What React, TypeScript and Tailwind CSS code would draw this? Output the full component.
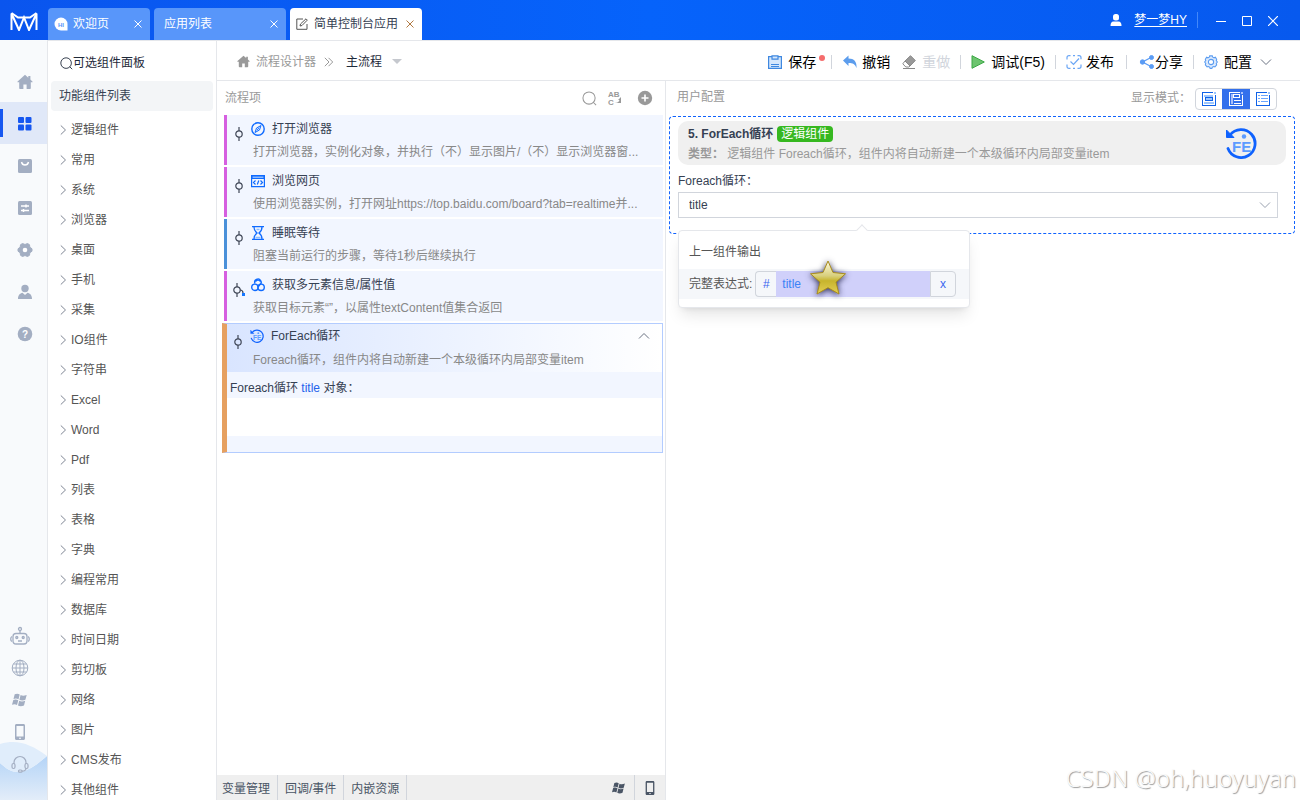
import type { ReactNode } from 'react';

const categorias = [
  '逻辑组件', '常用', '系统', '浏览器', '桌面', '手机', '采集', 'IO组件', '字符串', 'Excel', 'Word', 'Pdf',
  '列表', '表格', '字典', '编程常用', '数据库', '时间日期', '剪切板', '网络', '图片', 'CMS发布', '其他组件'
];

function Close() {
  return (
    <svg width="8" height="8" viewBox="0 0 8 8" fill="none" stroke="currentColor">
      <path d="M.5.5l7 7M7.5.5l-7 7" />
    </svg>
  );
}

function Chevron({ className = '' }: { className?: string }) {
  return (
    <svg className={className} width="12" height="8" viewBox="0 0 12 8" fill="none" stroke="currentColor">
      <path d="M1 1.5l5 5 5-5" />
    </svg>
  );
}

function HomeIcon({ size }: { size: number }) {
  return (
    <svg width={size} height={size} viewBox="0 0 16 16" fill="currentColor">
      <path d="M8 .8L.6 7.4c-.4.5-.1.9.4.9h1.2V14c0 .6.4 1 1 1h3.2v-4.6h3.2V15h3.2c.6 0 1-.4 1-1V8.300H15c.5 0 .8-.4.4-.9l-2-1.800V2h-2.100v1.700z" />
    </svg>
  );
}

function SearchIcon({ size }: { size: number }) {
  return (
    <svg width={size} height={size} viewBox="0 0 16 16" fill="none" stroke="currentColor" strokeWidth="1.100">
      <circle cx="7.500" cy="7.500" r="6.500" />
      <path d="M12 12l3 3" />
    </svg>
  );
}

function WindowsIcon({ size }: { size: number }) {
  return (
    <svg width={size} height={size} viewBox="0 0 16 16" fill="currentColor">
      <path d="M2.700 2.300c1.800-.9 3.500-.8 5 .2L6.500 7.300c-1.600-.9-3.300-1-5-.2zM8.600 3c1.700.9 3.600.9 6.100-.1l-1.300 4.900c-2.200 1-4.300 1-6 0zM1.300 8c1.700-.8 3.400-.7 5 .2L5 13c-1.600-1-3.300-1-5-.2zM7.200 8.700c1.700.9 3.700.9 6 0L12 13.500c-2.200 1-4.300 1-6 0z" />
    </svg>
  );
}

function PhoneIcon({ size }: { size: number }) {
  return (
    <svg width={size} height={size} viewBox="0 0 16 16">
      <path fill="currentColor" fillRule="evenodd" d="M4.500 0h7C12.400 0 13 .7 13 1.500v13c0 .8-.6 1.500-1.500 1.500h-7C3.600 16 3 15.300 3 14.500v-13C3 .7 3.600 0 4.500 0zm0 2v10.500h7V2zM7 13.700v1h2v-1z" />
    </svg>
  );
}

function ForEachIcon({ size }: { size: number }) {
  return (
    <svg width={size} height={size} viewBox="0 0 32 32" fill="none">
      <path d="M5 8A14 14 0 1 1 3 21.500" stroke="#0f62fe" strokeWidth="2.800" strokeLinecap="round" />
      <path d="M1.500 3v7.500H9L6.500 8 4 5.500z" fill="#0f62fe" stroke="#0f62fe" />
      <text x="7" y="25" fontSize="15" fontWeight="bold" fill="#5c9bff">FE</text>
      <circle cx="19" cy="9.500" r="2.200" fill="#5c9bff" />
    </svg>
  );
}

function NodeMark({ branch = false }: { branch?: boolean }) {
  return (
    <svg width="16" height="16" viewBox="0 0 16 16" fill="none" stroke="#3f4656" strokeWidth="1.200" className="shrink-0">
      <circle cx={branch ? 6 : 8} cy="8" r="3.200" />
      {branch ? <path d="M6 1v4M6 11v4M9 8q3 0 3 3" /> : <path d="M8 1v4M8 11v4" />}
      {branch && <path d="M11 11h3v3h-3z" fill="#1677ff" stroke="none" />}
    </svg>
  );
}

const menuIcons: ReactNode[] = [
  <HomeIcon size={16} />,
  <svg width="14" height="14" viewBox="0 0 14 14" fill="#1657f0">
    <rect width="6" height="6" rx="1" />
    <rect x="7.500" width="6" height="6" rx="1" />
    <rect y="7.500" width="6" height="6" rx="1" />
    <rect x="7.500" y="7.500" width="6" height="6" rx="1" />
  </svg>,
  <svg width="14" height="14" viewBox="0 0 14 14">
    <rect width="14" height="14" rx="1.500" fill="currentColor" />
    <path d="M3.500 3c.8 4 6.200 4 7 0" fill="none" stroke="#fff" strokeWidth="1.400" />
  </svg>,
  <svg width="14" height="14" viewBox="0 0 14 14">
    <rect width="14" height="14" rx="1.500" fill="currentColor" />
    <path d="M3 5h8M3 9.500h8" stroke="#fff" strokeWidth="1.300" />
    <path d="M8 3.500v3M5.500 8v3" stroke="#fff" strokeWidth="1.500" />
  </svg>,
  <svg width="16" height="16" viewBox="0 0 16 16">
    <path d="M5.500 1.500L8 2.500l2.500-1 2 1.200.3 2.500 2.200 1.600v2.400l-2.200 1.600-.3 2.500-2 1.200-2.500-1-2.500 1-2-1.200-.3-2.500L1 9.200V6.800l2.200-1.600.3-2.500z" fill="currentColor" stroke="currentColor" strokeLinejoin="round" />
    <circle cx="8" cy="8" r="2.300" fill="#fff" />
  </svg>,
  <svg width="16" height="16" viewBox="0 0 16 16" fill="currentColor">
    <circle cx="8" cy="4.500" r="3.700" />
    <path d="M1 15c0-4 2-5.500 4.500-6.200L8 11l2.500-2.200C13 9.500 15 11 15 15z" />
  </svg>,
  <svg width="16" height="16" viewBox="0 0 16 16">
    <circle cx="8" cy="8" r="7.300" fill="currentColor" />
    <text x="8" y="11.800" textAnchor="middle" fontSize="10" fontWeight="bold" fill="#fff">?</text>
  </svg>
];

const deviceIcons: ReactNode[] = [
  <svg width="20" height="20" viewBox="0 0 20 20" fill="none" stroke="currentColor" strokeWidth="1.300">
    <circle cx="10" cy="3" r="1.500" />
    <path d="M10 4.500V7M2 10.500c-1.700.8-1.700 4.200 0 5M18 10.500c1.700.8 1.700 4.200 0 5M8 15h4" />
    <rect x="3" y="7.500" width="14" height="10.500" rx="3" />
    <circle cx="6.800" cy="11.500" r="1" />
    <circle cx="13.200" cy="11.500" r="1" />
  </svg>,
  <svg width="18" height="18" viewBox="0 0 18 18" fill="none" stroke="currentColor">
    <circle cx="9" cy="9" r="7.800" />
    <ellipse cx="9" cy="9" rx="4" ry="7.800" />
    <path d="M9 1v16M1 9h16M2.500 5h13M2.500 13h13" />
  </svg>,
  <WindowsIcon size={16} />,
  <PhoneIcon size={16} />,
  <svg width="18" height="18" viewBox="0 0 18 18" fill="none" stroke="currentColor" strokeWidth="1.200">
    <path d="M3 9V7.500a6 6 0 0 1 12 0V9M15 13c0 2-2 3.200-4 3.200" />
    <rect x="1" y="8.500" width="3" height="5" rx="1.500" />
    <rect x="14" y="8.500" width="3" height="5" rx="1.500" />
    <rect x="7.500" y="15" width="3.500" height="2.200" rx="1" />
  </svg>
];

const steps = [
  {
    title: '打开浏览器',
    description: '打开浏览器，实例化对象，并执行（不）显示图片/（不）显示浏览器窗...',
    bar: 'border-[#d65fe0]',
    icon: (
      <svg width="14" height="14" viewBox="0 0 14 14" fill="none" stroke="#0f6bff">
        <circle cx="7" cy="7" r="6.200" strokeWidth="1.400" />
        <path d="M10 3.500L8.500 8 4 10.500 5.500 6zM8 5.500L6 8.500" />
      </svg>
    )
  },
  {
    title: '浏览网页',
    description: '使用浏览器实例，打开网址https://top.baidu.com/board?tab=realtime并...',
    bar: 'border-[#d65fe0]',
    icon: (
      <svg width="14" height="14" viewBox="0 0 14 14" fill="none" stroke="#0f6bff" strokeWidth="1.200">
        <path d="M.6 1.600h12.800v11H.6z" />
        <path d="M1 2h12v2.500H1z" fill="#8dbbff" />
        <path d="M4.500 6.500L2.500 8.500l2 2M9.500 6.500l2 2-2 2M7.800 6.500l-1.500 4" />
      </svg>
    )
  },
  {
    title: '睡眠等待',
    description: '阻塞当前运行的步骤，等待1秒后继续执行',
    bar: 'border-[#4a90d9]',
    icon: (
      <svg width="14" height="14" viewBox="0 0 14 14" fill="none" stroke="#0f6bff" strokeWidth="1.300">
        <path d="M1 .7h12M1 13.300h12M3 1c0 3.500 1 4.500 3 6-2 1.500-3 2.500-3 6M11 1c0 3.500-1 4.500-3 6 2 1.500 3 2.500 3 6" />
        <path d="M4.500 11.500h5M5.500 3.500h3" stroke="#8dbbff" />
      </svg>
    )
  },
  {
    title: '获取多元素信息/属性值',
    description: '获取目标元素“”，以属性textContent值集合返回',
    bar: 'border-[#d65fe0]',
    branch: true,
    icon: (
      <svg width="14" height="14" viewBox="0 0 14 14" fill="none" stroke="#0f6bff" strokeWidth="1.400">
        <path d="M4 5.500a3.200 3.200 0 1 1 4.800 1.300L7 9M4.500 3.500a3 3 0 0 1 5 0" />
        <circle cx="3.900" cy="9.300" r="3.200" />
        <circle cx="10.100" cy="9.300" r="3.200" />
      </svg>
    )
  }
];

function Divider() {
  return <span className="h-[14px] w-px bg-gray-300" />;
}

function ModeIcon({ kind }: { kind: 'card' | 'split' | 'list' }) {
  const stroke = kind === 'split' ? '#ffffff' : '#0f62e8';
  const soft = kind === 'split' ? '#a9c0fa' : '#9cc6ff';
  return (
    <svg width="14" height="14" viewBox="0 0 14 14" fill="none" shapeRendering="crispEdges">
      <path d="M11 .5H.5v13h13V3" stroke={stroke} />
      <path d="M12 1h2" stroke={soft} strokeWidth="2" />
      {kind === 'card' && (
        <>
          <path d="M2 3.500h9M2 11h10" stroke={soft} strokeWidth="2" />
          <rect x="3.500" y="5.500" width="7" height="3" fill={soft} stroke={stroke} />
        </>
      )}
      {kind === 'split' && (
        <>
          <path d="M2 2h2v10H2z" fill={soft} />
          <path d="M4.500 2.500h6v3h-6zM5 8.500h7M5 11.500h7" stroke={stroke} />
        </>
      )}
      {kind === 'list' && <path d="M2 3.500h2M5 3.500h7M2 6.500h2M5 6.500h7M2 9.500h2M5 9.500h7" stroke="#6ba6ff" />}
    </svg>
  );
}

function Header() {
  return (
    <header className="flex h-10 shrink-0 items-end bg-linear-to-r from-[#0a55ee] via-[#0663fb] to-[#0759ee] text-white">
      <div className="flex h-10 w-12 shrink-0 items-center justify-center pt-0.5">
        <svg width="28" height="20" viewBox="0 0 28 20" fill="none" stroke="#fff" strokeWidth="2">
          <path d="M1.500 19V2.500L9 19l5-12.500L19 19l7.500-16.500V19" />
          <path d="M1.500 2l6.500 4.500h12L26.500 2" />
        </svg>
      </div>
      <nav className="flex gap-1">
        <div className="flex h-8 w-[102px] items-center rounded-t bg-[#5896fa] pr-2 pl-1.5">
          <svg width="15" height="15" viewBox="0 0 15 15">
            <path d="M7 .5a6.500 6.500 0 1 0 0 13h6.500V7A6.500 6.500 0 0 0 7 .5z" fill="#fff" />
            <text x="7" y="9.500" textAnchor="middle" fontSize="6" fontWeight="bold" fill="#5896fa">HI</text>
          </svg>
          <a href="#welcome" className="ml-1 flex-1">欢迎页</a>
          <button aria-label="关闭欢迎页"><Close /></button>
        </div>
        <div className="flex h-8 w-[132px] items-center rounded-t bg-[#5896fa] pr-2 pl-2.5">
          <a href="#apps" className="flex-1">应用列表</a>
          <button aria-label="关闭应用列表"><Close /></button>
        </div>
        <div className="flex h-8 w-[132px] items-center rounded-t bg-white pr-2 pl-1.5 text-gray-700">
          <svg width="12" height="12" viewBox="0 0 12 12" fill="none" stroke="#555">
            <path d="M7 1H.8v10.300H11V6" />
            <path d="M4 8l.5-2L10 .8l1.300 1.300L6 7.500z" />
          </svg>
          <a href="#console" className="ml-1.5 flex-1">简单控制台应用</a>
          <button aria-label="关闭简单控制台应用" className="text-[#b07840]"><Close /></button>
        </div>
      </nav>
      <div className="ml-auto flex h-10 items-center pr-[22px]">
        <svg width="12" height="12" viewBox="0 0 12 12" fill="#fff">
          <rect x="3" width="6" height="6.500" rx="2.500" />
          <path d="M.5 12c0-3 1-4.500 3-4.500h5c2 0 3 1.500 3 4.500z" />
        </svg>
        <a href="#user" className="ml-3 underline underline-offset-2">梦一梦HY</a>
        <span className="mx-2.5 h-4 w-px bg-[#4388fa]" />
        <div className="ml-2 flex items-center gap-4 pt-0.5">
          <button aria-label="最小化">
            <svg width="10" height="10" viewBox="0 0 10 10" stroke="#fff"><path d="M0 5.500h10" /></svg>
          </button>
          <button aria-label="最大化">
            <svg width="10" height="10" viewBox="0 0 10 10" fill="none" stroke="#fff"><path d="M.5.5h9v9h-9z" /></svg>
          </button>
          <button aria-label="关闭">
            <svg width="10" height="10" viewBox="0 0 10 10" stroke="#fff" strokeWidth="1.200"><path d="M0 0l10 10M10 0L0 10" /></svg>
          </button>
        </div>
      </div>
    </header>
  );
}

function Sidebar() {
  return (
    <aside className="relative flex w-12 shrink-0 flex-col border-r border-gray-200 bg-[#f8fafc] pt-5 text-[#a3aec2]">
      <svg className="absolute bottom-0 left-0" width="47" height="59" viewBox="0 0 47 59">
        <defs>
          <linearGradient id="wave" x1="0" y1="0" x2="0" y2="1">
            <stop offset="0" stopColor="#b4d4f7" />
            <stop offset="1" stopColor="#e3edf9" />
          </linearGradient>
        </defs>
        <path d="M0 22c14 13 24 13 47-7v44H0z" fill="url(#wave)" />
        <path d="M0 3C18-2 30 3 47 15 24 35 14 35 0 22z" fill="#e0edfb" />
      </svg>
      {menuIcons.map((icon, idx) => (
        <button
          key={idx}
          aria-label={`菜单${idx + 1}`}
          className={idx === 1 ? 'flex h-[42px] items-center bg-[#e0e8f8]' : 'flex h-[42px] items-center'}
        >
          <span className={idx === 1 ? 'h-7 w-[3px] bg-[#1657f0]' : 'h-7 w-[3px]'} />
          <span className="flex flex-1 justify-center pt-px">{icon}</span>
        </button>
      ))}
      <div className="relative mt-auto flex flex-col pr-2 pb-5">
        {deviceIcons.map((icon, idx) => (
          <button key={idx} aria-label={`设备${idx + 1}`} className="flex h-8 items-center justify-center">
            {icon}
          </button>
        ))}
      </div>
    </aside>
  );
}

function ComponentPanel() {
  return (
    <section className="flex w-[169px] shrink-0 flex-col overflow-hidden border-t border-r border-gray-200 text-[#555]">
      <h2 className="flex h-10 shrink-0 items-center pt-1 pl-3 text-gray-800">
        <SearchIcon size={13} />
        可选组件面板
      </h2>
      <h3 className="mx-[3px] mb-1 flex h-[30px] shrink-0 items-center rounded bg-[#f3f5f7] px-2 text-gray-700">
        功能组件列表
      </h3>
      <ul>
        {categorias.map((nome) => (
          <li key={nome}>
            <button className="flex h-[30px] w-full items-center gap-1 pl-3">
              <svg width="7" height="12" viewBox="0 0 7 12" fill="none" stroke="#7f8694">
                <path d="M.8 1.500L5.500 6 .8 10.500" />
              </svg>
              {nome}
            </button>
          </li>
        ))}
      </ul>
    </section>
  );
}

function Toolbar() {
  return (
    <div className="flex h-10 shrink-0 items-center border-b border-gray-200 pt-0.5 pr-7 pl-5">
      <nav className="flex items-center text-[#999]">
        <HomeIcon size={13} />
        <a href="#designer" className="ml-1.5">流程设计器</a>
        <svg className="ml-2" width="10" height="10" viewBox="0 0 10 10" fill="none" stroke="currentColor">
          <path d="M.8.8L5 5 .8 9.200M4.500.8L8.700 5l-4.200 4.200" />
        </svg>
        <button className="ml-3 flex items-center gap-2.5 text-gray-800">
          主流程
          <svg width="10" height="5" viewBox="0 0 10 5" fill="#c5c8ce"><path d="M0 0h10L5 5z" /></svg>
        </button>
      </nav>
      <div className="ml-auto flex items-center text-sm text-black">
        <button className="flex items-center gap-1.5">
          <svg width="14" height="14" viewBox="0 0 14 14" fill="#d5e7fc" stroke="#3f88e0" strokeWidth="1.200">
            <path d="M.6 1.600h12.800v11.800H.6z" />
            <path d="M4 .8h6v3.400H4z" />
            <path d="M3 9.500h8M3 11.500h8" />
          </svg>
          保存
        </button>
        <span className="mb-2 ml-[3px] size-1.5 rounded-full bg-[#f56c6c]" />
        <span className="mx-1.5 flex"><Divider /></span>
        <button className="ml-1 flex items-center gap-1">
          <svg width="16" height="14" viewBox="0 0 16 14" fill="#5c9ded">
            <path d="M1 5.500L6.500.5v3c5.500 0 8.500 3 8 9.500C13 9 11 8 6.500 8v3z" />
          </svg>
          撤销
        </button>
        <button disabled className="ml-3 flex items-center gap-1.5 text-gray-300">
          <svg width="14" height="14" viewBox="0 0 14 14" fill="#999" stroke="#888">
            <path d="M8.500.7L13.300 5.500 8 11 3 6z" />
            <path d="M3 6L.8 8.800l3 3.200h3L8 11z" fill="#fff" />
            <path d="M1 13.500h12" />
          </svg>
          重做
        </button>
        <span className="mx-2.5 flex"><Divider /></span>
        <button className="flex items-center gap-1.5">
          <svg width="14" height="14" viewBox="0 0 14 14" fill="#6dc46f" stroke="#3ba745">
            <path d="M1 .7L13.300 7 1 13.300z" />
          </svg>
          调试(F5)
        </button>
        <span className="mx-2.5 flex"><Divider /></span>
        <button className="flex items-center gap-1">
          <svg width="16" height="14" viewBox="0 0 16 14" fill="none" stroke="#6ba6f5" strokeWidth="1.200">
            <path d="M1 4.500v-2Q1 .7 3 .7h1.500M11.500.7H13q2 0 2 2v1.500M15 9.500v2q0 1.800-2 1.800h-1.500M4.500 13.300H3q-2 0-2-1.800v-2M7 .7h2M7 13.300h2" />
            <path d="M4.500 6.500l3 3L13 3.500" />
          </svg>
          发布
        </button>
        <span className="mx-3 flex"><Divider /></span>
        <button className="flex items-center">
          <svg width="16" height="14" viewBox="0 0 16 14" fill="#5b9cf5" stroke="#5b9cf5">
            <path d="M12 2.500L3.500 7l8.500 4.500" fill="none" strokeWidth="1.300" />
            <circle cx="3.500" cy="7" r="2.200" />
            <circle cx="12.500" cy="2.500" r="2" />
            <circle cx="12.500" cy="11.500" r="2" />
          </svg>
          分享
        </button>
        <span className="mx-2.5 flex"><Divider /></span>
        <button className="flex items-center gap-1.5">
          <svg width="14" height="14" viewBox="0 0 16 16" fill="#dceafd" stroke="#5b9cf0" strokeWidth="1.200">
            <path d="M6.500 1h3l.5 1.500 1.500.7L13 2.500 14.500 5l-.5 1.500L15.300 8 14 9.500l.5 1.700L12.500 13.500l-1.500-.4-1.400.7-.6 1.500H7l-.6-1.500-1.400-.7-1.500.4L1.500 11.200 2 9.500.7 8 2 6.500 1.500 5 3 2.500l1.500.7L6 2.500z" />
            <circle cx="8" cy="8" r="3" fill="#fff" />
          </svg>
          配置
          <Chevron className="ml-0.5 text-gray-500" />
        </button>
      </div>
    </div>
  );
}

function FlowPanel() {
  return (
    <section className="flex w-[449px] shrink-0 flex-col border-r border-gray-200">
      <div className="flex h-[34px] shrink-0 items-center pr-3 pl-2 text-[#999]">
        <h2 className="flex-1">流程项</h2>
        <div className="flex items-center gap-2.5">
          <button aria-label="搜索"><SearchIcon size={15} /></button>
          <button aria-label="替换">
            <svg width="16" height="16" viewBox="0 0 16 16" fill="currentColor">
              <text x="1" y="7" fontSize="8" fontWeight="bold">AB</text>
              <text x="1" y="15" fontSize="8" fontWeight="bold">C</text>
              <path d="M7.500 13c3 0 4.500-1 5-3h-1.500L14 7v6z" />
            </svg>
          </button>
          <button aria-label="添加" className="ml-1">
            <svg width="16" height="16" viewBox="0 0 16 16">
              <circle cx="8" cy="8" r="7.200" fill="currentColor" />
              <path d="M8 4.500v7M4.500 8h7" stroke="#fff" strokeWidth="1.600" />
            </svg>
          </button>
        </div>
      </div>
      <div className="flex flex-1 flex-col gap-0.5 pr-0.5">
        {steps.map((step) => (
          <article key={step.title} className={`ml-[7px] flex h-[50px] items-center border-l-[3px] bg-[#f2f6ff] pl-1 ${step.bar}`}>
            <div className="flex h-9 items-center pb-3"><NodeMark branch={step.branch} /></div>
            <div className="min-w-0 flex-1">
              <h3 className="flex h-6 items-center gap-[7px] pl-1 text-gray-700">
                {step.icon}
                {step.title}
              </h3>
              <p className="h-[22px] pl-1.5 leading-[22px] whitespace-nowrap text-[#888]">{step.description}</p>
            </div>
          </article>
        ))}
        <article className="ml-[5px] border border-l-[5px] border-[#b3ccff] border-l-[#e6a060] bg-[#f2f6ff]">
          <div className="flex h-12 items-center bg-linear-to-r from-[#d9e5ff] to-white pl-[3px]">
            <div className="flex h-9 items-center pb-3"><NodeMark /></div>
            <div className="flex-1">
              <h3 className="flex h-6 items-center gap-[7px] pr-3 pl-1 text-gray-700">
                <ForEachIcon size={14} />
                ForEach循环
                <button aria-label="收起" className="ml-auto text-gray-500"><Chevron className="rotate-180" /></button>
              </h3>
              <p className="h-6 pl-[7px] leading-6 text-[#888]">Foreach循环，组件内将自动新建一个本级循环内局部变量item</p>
            </div>
          </div>
          <p className="h-[26px] pt-2 pl-[3px] leading-4 text-gray-700">
            Foreach循环 <span className="text-[#2563eb]">title</span> 对象：
          </p>
          <div className="h-[38px] bg-white" />
          <div className="h-4" />
        </article>
      </div>
      <footer className="flex h-[25px] shrink-0 items-center bg-[#efefef] text-gray-600">
        <button className="h-full border-r border-gray-300 pt-0.5 pr-[7px] pl-[5px]">变量管理</button>
        <button className="h-full border-r border-gray-300 px-[7px] pt-0.5">回调/事件</button>
        <button className="h-full border-r border-gray-300 px-[7px] pt-0.5">内嵌资源</button>
        <button aria-label="Windows" className="ml-auto flex h-full items-center border-r border-gray-300 pr-2"><WindowsIcon size={14} /></button>
        <button aria-label="手机" className="px-2"><PhoneIcon size={14} /></button>
      </footer>
    </section>
  );
}

function StarIcon() {
  return (
    <svg className="absolute -top-[11px] left-[54px] overflow-visible drop-shadow-[0_1px_3px_rgba(20,20,60,0.9)]" width="38" height="36" viewBox="0 0 38 36">
      <defs>
        <linearGradient id="star" x1="0" y1="0" x2="0" y2="1">
          <stop offset="0" stopColor="#fffbe0" />
          <stop offset=".45" stopColor="#d8cf7c" />
          <stop offset=".6" stopColor="#c7b42c" />
          <stop offset="1" stopColor="#e3cf55" />
        </linearGradient>
      </defs>
      <path d="M19 1l5 11.500 12.500 1.300-9.500 8.400L30 34l-11-6.300L8 34l3-11.800-9.500-8.400L14 12.500z" fill="url(#star)" stroke="#a98c1c" />
    </svg>
  );
}

function ConfigPanel() {
  return (
    <section className="min-w-0 flex-1">
      <div className="flex h-[35px] items-center pr-[23px] pl-[11px] text-[#999]">
        <h2 className="flex-1 pb-1">用户配置</h2>
        <span className="pb-0.5">显示模式：</span>
        <div className="ml-1 flex h-[22px] overflow-hidden rounded border border-gray-300">
          <button aria-label="卡片" className="flex w-[26px] items-center justify-center"><ModeIcon kind="card" /></button>
          <button aria-label="分栏" className="-my-px flex w-7 items-center justify-center bg-[#3370ec]"><ModeIcon kind="split" /></button>
          <button aria-label="列表" className="flex w-[26px] items-center justify-center"><ModeIcon kind="list" /></button>
        </div>
      </div>
      <div className="relative mr-[5px] ml-[3px] h-[118px] rounded border border-dashed border-[#0f62fe] pt-1 pr-2 pl-2">
        <div className="flex h-11 items-center rounded-[10px] bg-[#f0f0f0] pr-[29px] pl-2.5">
          <div className="flex-1 pt-0.5">
            <h3 className="flex h-5 items-center gap-1 font-bold text-gray-700">
              5. ForEach循环
              <span className="rounded bg-[#36b820] px-1 leading-4 font-normal text-white">逻辑组件</span>
            </h3>
            <p className="h-5 leading-5 text-[#999]">
              <span className="font-bold">类型：</span> 逻辑组件 Foreach循环，组件内将自动新建一个本级循环内局部变量item
            </p>
          </div>
          <ForEachIcon size={32} />
        </div>
        <label htmlFor="loop" className="mt-2 block h-[19px] leading-4 text-gray-700">Foreach循环：</label>
        <div className="mr-2 grid items-center">
          <select id="loop" className="col-start-1 row-start-1 h-[26px] w-full appearance-none border border-gray-300 bg-white px-2.5 text-gray-700">
            <option>title</option>
          </select>
          <Chevron className="pointer-events-none col-start-1 row-start-1 mr-[7px] justify-self-end text-gray-400" />
        </div>
        <div className="absolute top-[113px] left-2 w-[292px] rounded border border-gray-200 bg-white pb-2 text-[#555] shadow-lg">
          <span className="absolute -top-[5px] left-[179px] size-2 rotate-45 border-t border-l border-gray-200 bg-white" />
          <p className="h-[38px] pt-1 pl-2.5 leading-[34px]">上一组件输出</p>
          <div className="flex h-[30px] items-center bg-[#f5f7fa] pr-[13px] pl-2.5">
            <label htmlFor="expr" className="mr-[3px] shrink-0 whitespace-nowrap">完整表达式:</label>
            <div className="relative flex h-[26px] min-w-0 flex-1 text-[#3b66f0]">
              <button className="w-[21px] shrink-0 rounded-l border border-r-0 border-gray-300">#</button>
              <input id="expr" defaultValue="title" className="w-0 min-w-0 flex-1 bg-[#d0d0fa] px-1.5 text-[#3b82f6]" />
              <button className="w-[26px] shrink-0 rounded-r border border-gray-300">x</button>
              <StarIcon />
            </div>
          </div>
        </div>
      </div>
    </section>
  );
}

export default function App() {
  return (
    <div className="relative flex h-screen flex-col overflow-hidden bg-white font-['Liberation_Sans','Noto_Sans_CJK_SC',sans-serif] text-xs">
      <Header />
      <div className="flex min-h-0 flex-1">
        <Sidebar />
        <ComponentPanel />
        <main className="flex min-w-0 flex-1 flex-col border-t border-gray-200">
          <Toolbar />
          <div className="flex min-h-0 flex-1">
            <FlowPanel />
            <ConfigPanel />
          </div>
        </main>
      </div>
      <p className="absolute right-1 bottom-1.5 font-['Noto_Sans',sans-serif] text-2xl font-light text-[#fafafa] [text-shadow:1px_1px_1px_#999]">
        CSDN @oh,huoyuyan
      </p>
    </div>
  );
}
